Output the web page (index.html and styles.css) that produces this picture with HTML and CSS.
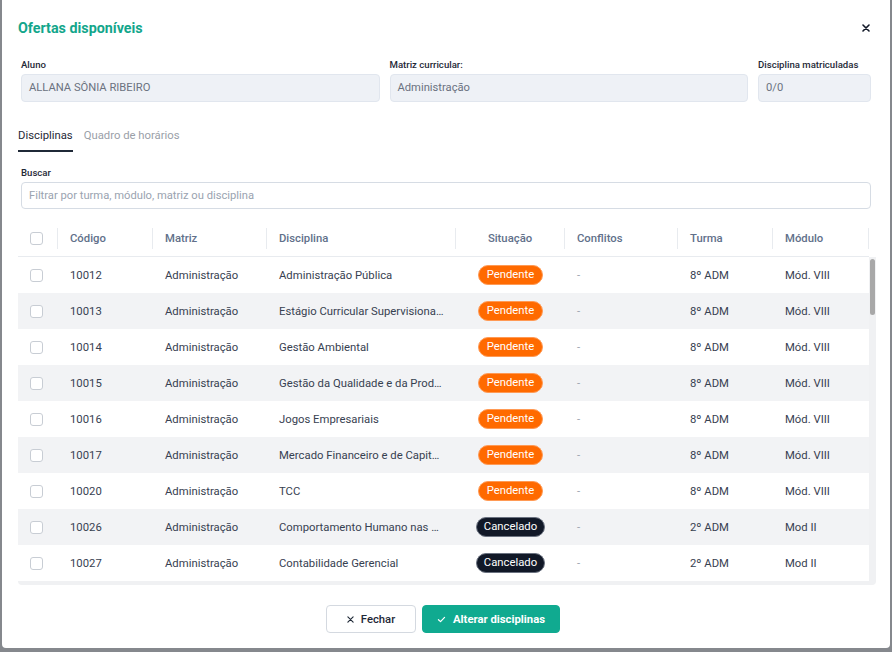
FILE: index.html
```html
<!DOCTYPE html>
<html lang="pt-BR">
<head>
    <meta charset="UTF-8">
    <meta name="viewport" content="width=device-width, initial-scale=1.0">
    <title>Ofertas disponíveis</title>
    <link rel="stylesheet" href="styles.css">
</head>
<body>
    <div class="modal">
        <div class="modal-header">
            <h2 class="modal-title">Ofertas disponíveis</h2>
            <button class="close-btn" aria-label="Fechar">
                <svg width="8" height="8" viewBox="0 0 8 8"><path d="M1 1L7 7M7 1L1 7" stroke="#111827" stroke-width="1.6" stroke-linecap="round"/></svg>
            </button>
        </div>

        <div class="fields">
            <div class="field field-aluno">
                <label>Aluno</label>
                <div class="input readonly">ALLANA SÔNIA RIBEIRO</div>
            </div>
            <div class="field field-matriz">
                <label>Matriz curricular:</label>
                <div class="input readonly">Administração</div>
            </div>
            <div class="field field-count">
                <label>Disciplina matriculadas</label>
                <div class="input readonly">0/0</div>
            </div>
        </div>

        <div class="tabs">
            <div class="tab active">Disciplinas</div>
            <div class="tab">Quadro de horários</div>
        </div>

        <div class="field search">
            <label>Buscar</label>
            <div class="input placeholder">Filtrar por turma, módulo, matriz ou disciplina</div>
        </div>

        <div class="table">
            <div class="row head">
                <div class="cell check"><span class="checkbox"></span></div>
                <div class="cell">Código</div>
                <div class="cell">Matriz</div>
                <div class="cell">Disciplina</div>
                <div class="cell center">Situação</div>
                <div class="cell">Conflitos</div>
                <div class="cell">Turma</div>
                <div class="cell">Módulo</div>
            </div>
            <div class="table-body">
                <div class="rows">
                    <div class="row">
                        <div class="cell check"><span class="checkbox"></span></div>
                        <div class="cell">10012</div>
                        <div class="cell">Administração</div>
                        <div class="cell">Administração Pública</div>
                        <div class="cell center"><span class="badge pending">Pendente</span></div>
                        <div class="cell muted">-</div>
                        <div class="cell">8º ADM</div>
                        <div class="cell">Mód. VIII</div>
                    </div>
                    <div class="row">
                        <div class="cell check"><span class="checkbox"></span></div>
                        <div class="cell">10013</div>
                        <div class="cell">Administração</div>
                        <div class="cell">Estágio Curricular Supervisionado</div>
                        <div class="cell center"><span class="badge pending">Pendente</span></div>
                        <div class="cell muted">-</div>
                        <div class="cell">8º ADM</div>
                        <div class="cell">Mód. VIII</div>
                    </div>
                    <div class="row">
                        <div class="cell check"><span class="checkbox"></span></div>
                        <div class="cell">10014</div>
                        <div class="cell">Administração</div>
                        <div class="cell">Gestão Ambiental</div>
                        <div class="cell center"><span class="badge pending">Pendente</span></div>
                        <div class="cell muted">-</div>
                        <div class="cell">8º ADM</div>
                        <div class="cell">Mód. VIII</div>
                    </div>
                    <div class="row">
                        <div class="cell check"><span class="checkbox"></span></div>
                        <div class="cell">10015</div>
                        <div class="cell">Administração</div>
                        <div class="cell">Gestão da Qualidade e da Produção</div>
                        <div class="cell center"><span class="badge pending">Pendente</span></div>
                        <div class="cell muted">-</div>
                        <div class="cell">8º ADM</div>
                        <div class="cell">Mód. VIII</div>
                    </div>
                    <div class="row">
                        <div class="cell check"><span class="checkbox"></span></div>
                        <div class="cell">10016</div>
                        <div class="cell">Administração</div>
                        <div class="cell">Jogos Empresariais</div>
                        <div class="cell center"><span class="badge pending">Pendente</span></div>
                        <div class="cell muted">-</div>
                        <div class="cell">8º ADM</div>
                        <div class="cell">Mód. VIII</div>
                    </div>
                    <div class="row">
                        <div class="cell check"><span class="checkbox"></span></div>
                        <div class="cell">10017</div>
                        <div class="cell">Administração</div>
                        <div class="cell">Mercado Financeiro e de Capitais</div>
                        <div class="cell center"><span class="badge pending">Pendente</span></div>
                        <div class="cell muted">-</div>
                        <div class="cell">8º ADM</div>
                        <div class="cell">Mód. VIII</div>
                    </div>
                    <div class="row">
                        <div class="cell check"><span class="checkbox"></span></div>
                        <div class="cell">10020</div>
                        <div class="cell">Administração</div>
                        <div class="cell">TCC</div>
                        <div class="cell center"><span class="badge pending">Pendente</span></div>
                        <div class="cell muted">-</div>
                        <div class="cell">8º ADM</div>
                        <div class="cell">Mód. VIII</div>
                    </div>
                    <div class="row">
                        <div class="cell check"><span class="checkbox"></span></div>
                        <div class="cell">10026</div>
                        <div class="cell">Administração</div>
                        <div class="cell">Comportamento Humano nas Organizações</div>
                        <div class="cell center"><span class="badge canceled">Cancelado</span></div>
                        <div class="cell muted">-</div>
                        <div class="cell">2º ADM</div>
                        <div class="cell">Mod II</div>
                    </div>
                    <div class="row">
                        <div class="cell check"><span class="checkbox"></span></div>
                        <div class="cell">10027</div>
                        <div class="cell">Administração</div>
                        <div class="cell">Contabilidade Gerencial</div>
                        <div class="cell center"><span class="badge canceled">Cancelado</span></div>
                        <div class="cell muted">-</div>
                        <div class="cell">2º ADM</div>
                        <div class="cell">Mod II</div>
                    </div>
                </div>
                <div class="scrollbar"><div class="thumb"></div></div>
            </div>
        </div>

        <div class="footer">
            <button class="btn btn-outline">
                <svg width="7" height="7" viewBox="0 0 8 8"><path d="M1 1L7 7M7 1L1 7" stroke="#1f2937" stroke-width="1.3" stroke-linecap="round"/></svg>
                Fechar
            </button>
            <button class="btn btn-primary">
                <svg width="9" height="7" viewBox="0 0 10 8"><path d="M1.5 4.2L3.9 6.4L8.5 1.6" fill="none" stroke="#fff" stroke-width="1.4" stroke-linecap="round" stroke-linejoin="round"/></svg>
                Alterar disciplinas
            </button>
        </div>
    </div>
</body>
</html>
```

FILE: styles.css
```css
body {
    margin: 0;
    height: 652px;
    background-color: #85888d;
    font-family: Roboto, "Liberation Sans", Arial, sans-serif;
    color: #1f2937;
    overflow: hidden;
}
.modal {
    margin: 0 2px;
    height: 648px;
    box-sizing: border-box;
    background-color: #fff;
    border-radius: 0 0 4px 4px;
    padding: 0 16px;
    display: flex;
    flex-direction: column;
}
.modal-header {
    display: flex;
    align-items: center;
    justify-content: space-between;
    height: 55px;
}
.modal-title {
    margin: 0;
    font-size: 14.3px;
    font-weight: 700;
    color: #13a68b;
}
.close-btn {
    background: none;
    border: none;
    padding: 0;
    margin-right: 4px;
    display: flex;
    cursor: pointer;
}
.fields {
    display: flex;
    gap: 10px;
    padding: 0 3px;
    margin-top: 4px;
}
.field label {
    display: block;
    font-size: 9.6px;
    font-weight: 500;
    color: #1f2937;
    margin-bottom: 4px;
    line-height: 11px;
}
.field-aluno, .field-matriz {
    flex: 1;
}
.field-count {
    width: 113px;
}
.input {
    height: 28px;
    box-sizing: border-box;
    border-radius: 4px;
    border: 1px solid #e1e6ee;
    padding: 0 7px;
    font-size: 11.2px;
    line-height: 26px;
    color: #6b7280;
}
.input.readonly {
    background-color: #eef1f6;
}
.tabs {
    display: flex;
    gap: 11px;
    margin-top: 24px;
    height: 26px;
}
.tab {
    font-size: 11.3px;
    color: #9aa0a8;
    line-height: 16px;
    padding-top: 2px;
}
.tab.active {
    color: #1f2937;
    border-bottom: 2px solid #1f2937;
}
.search {
    margin-top: 15px;
    padding: 0 3px;
}
.input.placeholder {
    background-color: #fff;
    border-color: #d6dce4;
    height: 27px;
    color: #9aa3b0;
}
.table {
    margin-top: 12px;
    width: 858px;
}
.row {
    display: grid;
    grid-template-columns: 40px 95px 114px 189px 109px 113px 95px 96px;
    height: 36px;
    align-items: center;
    font-size: 11.3px;
    color: #374151;
}
.row.head {
    height: 35px;
    border-bottom: 1px solid #e8ebef;
    color: #61708a;
    font-weight: 500;
    width: 851px;
}
.head .cell {
    border-right: 1px solid #e8ebef;
    height: 21px;
    line-height: 21px;
}
.cell {
    padding: 0 12px;
    white-space: nowrap;
    overflow: hidden;
    text-overflow: ellipsis;
}
.cell.center {
    text-align: center;
    padding: 0 4px;
}
.cell.muted {
    color: #9ca3af;
}
.cell.check {
    display: flex;
    align-items: center;
}
.checkbox {
    display: inline-block;
    width: 11px;
    height: 11px;
    border: 1px solid #c8cdd4;
    border-radius: 3px;
    background: #fff;
}
.table-body {
    position: relative;
    height: 328px;
    background-color: #f0f1f3;
    border-radius: 0 0 4px 4px;
    overflow: hidden;
}
.rows {
    width: 851px;
}
.rows .row:nth-child(even) {
    background-color: #f2f3f5;
}
.rows .row:nth-child(odd) {
    background-color: #fff;
}
.scrollbar {
    position: absolute;
    top: 0;
    right: 0;
    width: 7px;
    height: 324px;
}
.thumb {
    margin-top: 2px;
    margin-left: 1px;
    width: 5px;
    height: 56px;
    border-radius: 3px;
    background-color: #a8a8a8;
}
.badge {
    display: inline-block;
    font-size: 11.3px;
    font-weight: 400;
    color: #fff;
    line-height: 18px;
    border-radius: 10px;
}
.badge.pending {
    background-color: #ff6a00;
    border: 1px solid #ff9a55;
    padding: 0 8px;
}
.badge.canceled {
    background-color: #111827;
    border: 1px solid #6b7280;
    padding: 0 7px;
}
.footer {
    display: flex;
    justify-content: center;
    gap: 6px;
    margin-top: 20px;
    padding-right: 6px;
}
.btn {
    height: 28px;
    display: flex;
    align-items: center;
    gap: 7px;
    font-family: inherit;
    font-size: 11.3px;
    font-weight: 500;
    border-radius: 4px;
    cursor: pointer;
}
.btn-outline {
    width: 90px;
    justify-content: center;
    background: #fff;
    border: 1px solid #d4d9e0;
    color: #1f2937;
}
.btn-primary {
    width: 138px;
    justify-content: center;
    background-color: #10aa90;
    border: 1px solid #10aa90;
    color: #fff;
    font-weight: 700;
}
```
